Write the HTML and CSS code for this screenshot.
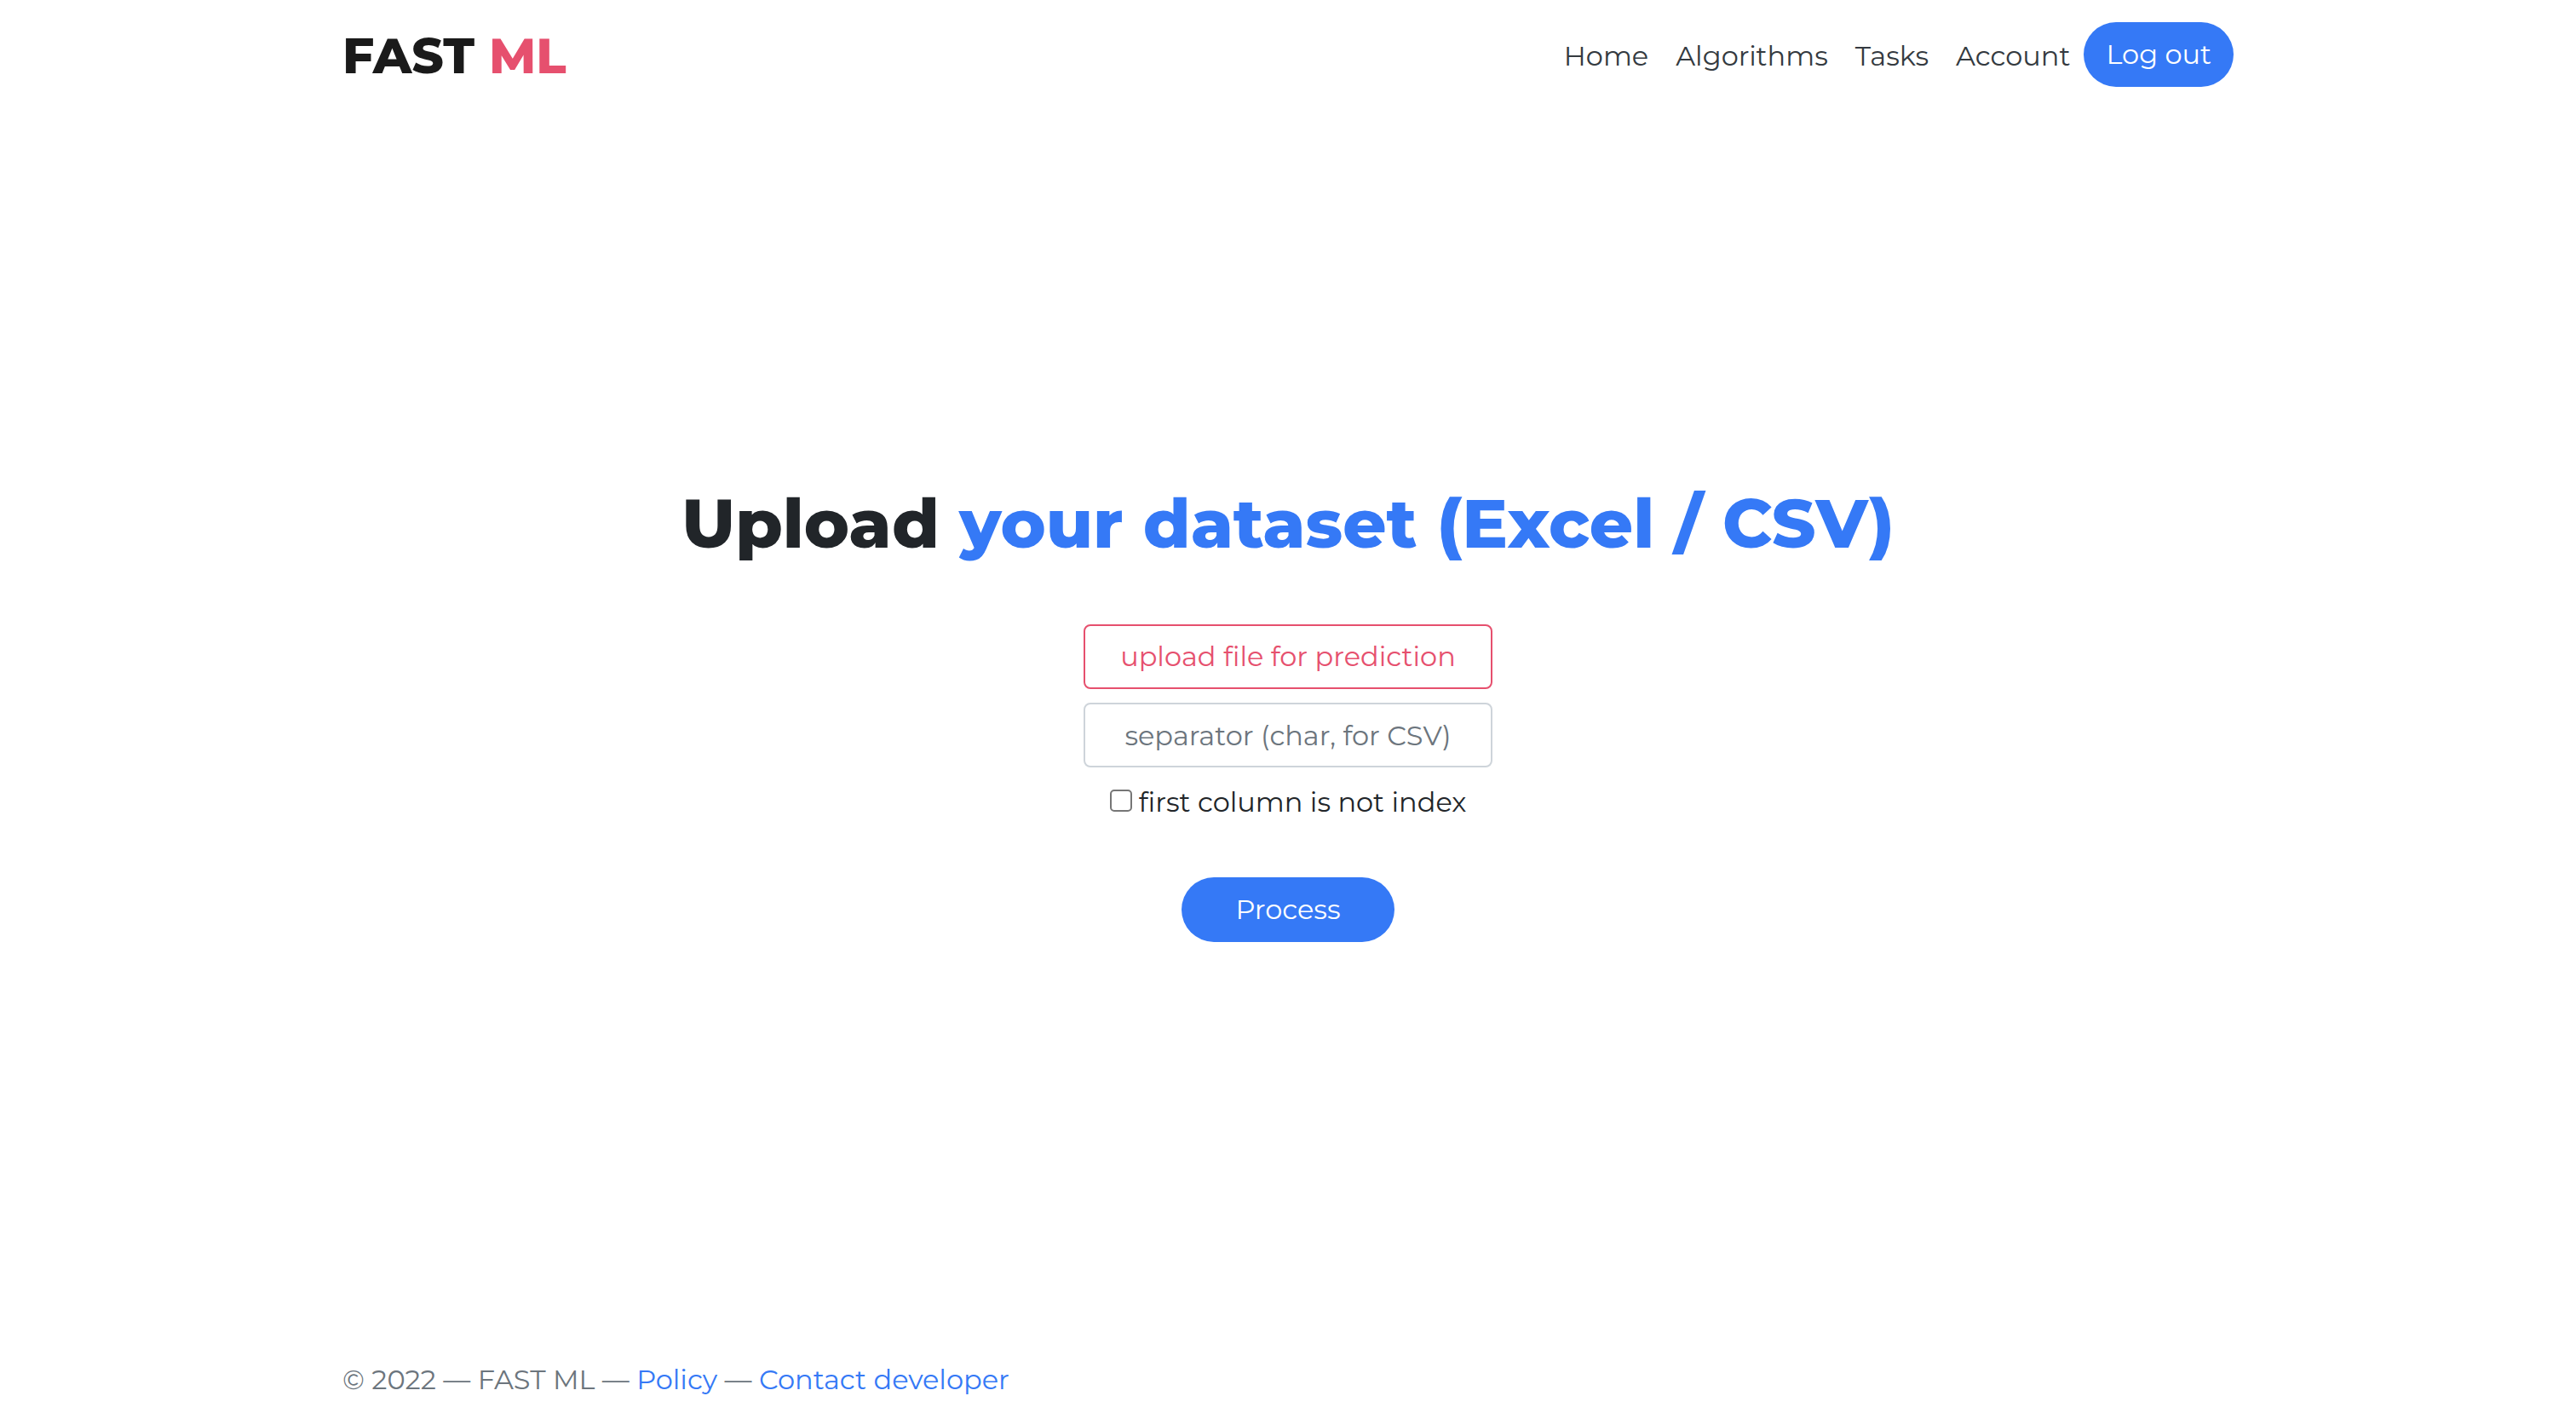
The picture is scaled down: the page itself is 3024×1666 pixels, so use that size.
FILE: index.html
```html
<!DOCTYPE html>
<html lang="en">
<head>
  <meta charset="utf-8">
  <meta name="viewport" content="width=device-width, initial-scale=1">
  <title>FAST ML</title>
  <link rel="stylesheet" href="styles.css">
</head>
<body>
  <header class="container header">
    <a class="brand" href="#">FAST <span class="brand-accent">ML</span></a>
    <nav class="nav">
      <a class="nav-link" href="#">Home</a>
      <a class="nav-link" href="#">Algorithms</a>
      <a class="nav-link" href="#">Tasks</a>
      <a class="nav-link" href="#">Account</a>
      <button class="button logout" type="button">Log out</button>
    </nav>
  </header>

  <main class="container main">
    <h1 class="title">Upload <span class="title-accent">your dataset (Excel / CSV)</span></h1>
    <form class="form">
      <button class="field upload" type="button">upload file for prediction</button>
      <input class="field separator" type="text" placeholder="separator (char, for CSV)" aria-label="Separator">
      <div class="check">
        <input class="check-box" type="checkbox" id="no-index">
        <label for="no-index">first column is not index</label>
      </div>
      <button class="button process" type="submit">Process</button>
    </form>
  </main>

  <footer class="container footer">
    <p class="footer-text">© 2022 — FAST ML — <a class="footer-link" href="#">Policy</a> — <a class="footer-link" href="#">Contact developer</a></p>
  </footer>
</body>
</html>
```
FILE: styles.css
```css
* {
  box-sizing: border-box;
}

body {
  margin: 0;
  min-height: 100vh;
  display: flex;
  flex-direction: column;
  background: #fff;
  color: #212529;
  font-family: Montserrat, Inter, sans-serif;
  font-size: 32px;
  line-height: 48px;
}

a {
  text-decoration: none;
}

button,
input {
  font: inherit;
}

.container {
  width: 100%;
  max-width: 2280px;
  margin: 0 auto;
  padding: 0 30px;
}

.header {
  display: flex;
  align-items: center;
  justify-content: space-between;
  padding-top: 26px;
  padding-bottom: 26px;
}

.brand {
  padding-top: 4px;
  color: #1a1a1a;
  font-size: 58px;
  font-weight: 800;
}

.brand-accent {
  color: #e6506e;
}

.nav {
  display: flex;
  align-items: center;
}

.nav-link {
  padding: 4px 16px 0;
  color: #343a40;
}

.button {
  height: 76px;
  border: 0;
  border-radius: 38px;
  background: #3579f6;
  color: #fff;
  cursor: pointer;
}

.logout {
  padding: 0 26px;
}

.main {
  flex: 1;
  display: flex;
  flex-direction: column;
  align-items: center;
  justify-content: center;
}

.title {
  margin: 0 0 70px;
  font-size: 80px;
  font-weight: 800;
  line-height: 96px;
  text-align: center;
}

.title-accent {
  color: #3579f6;
}

.form {
  width: 480px;
  max-width: 100%;
  display: flex;
  flex-direction: column;
  align-items: center;
}

.field {
  width: 100%;
  height: 76px;
  margin-bottom: 16px;
  padding: 0 24px;
  border: 2px solid #ced4da;
  border-radius: 8px;
  background: #fff;
  text-align: center;
}

.upload {
  border-color: #e6506e;
  color: #e6506e;
  cursor: pointer;
}

.separator {
  padding-top: 2px;
}

.separator::placeholder {
  color: #6c757d;
  opacity: 1;
}

.check {
  display: flex;
  align-items: flex-start;
  gap: 8px;
  padding-top: 1px;
}

.check-box {
  appearance: none;
  width: 26px;
  height: 26px;
  margin: 9px 0 0;
  border: 2px solid #767676;
  border-radius: 5px;
  background: #fff;
}

.check-box:checked {
  border-color: #3579f6;
  background: #3579f6;
}

.process {
  width: 250px;
  margin-top: 64px;
}

.footer {
  padding-top: 52px;
  padding-bottom: 22px;
}

.footer-text {
  margin: 0;
  color: #6c757d;
}

.footer-link {
  color: #3579f6;
}
```
